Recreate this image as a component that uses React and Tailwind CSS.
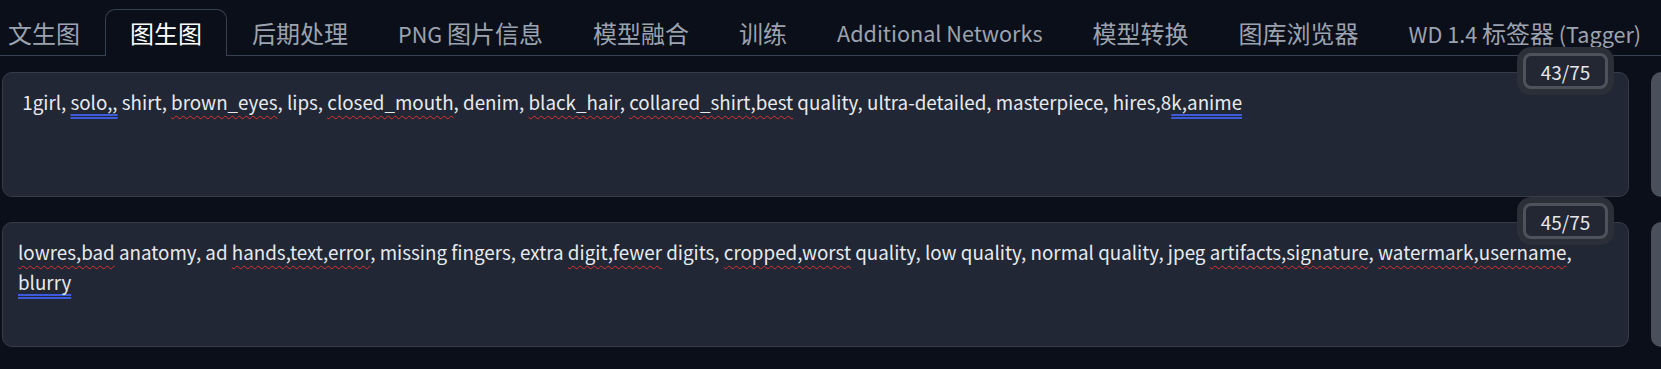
import React from "react";

const tabs = ["文生图", "图生图", "后期处理", "PNG 图片信息", "模型融合", "训练", "Additional Networks", "模型转换", "图库浏览器", "WD 1.4 标签器 (Tagger)"];

function Label({ text }) {
  const parts = text.split(/([\u4e00-\u9fff]+)/).filter(Boolean);
  return (
    <span>
      {parts.map((p, i) =>
        /[\u4e00-\u9fff]/.test(p) ? (
          <span key={i} className="text-[24px]">{p}</span>
        ) : (
          <span key={i} className="whitespace-pre text-[21.6px]">{p}</span>
        )
      )}
    </span>
  );
}

const R = ({ children }) => (
  <span className="underline decoration-wavy decoration-[#e03131] decoration-[1px] underline-offset-[5px]">{children}</span>
);
const B = ({ children }) => (
  <span className="underline decoration-double decoration-[#3b5bdb] decoration-[1.5px] underline-offset-[4px]">{children}</span>
);

function Counter({ value }) {
  return (
    <div className="absolute top-[-19px] right-[21px] w-[85px] h-[36px] flex items-center justify-center rounded-[8px] border-[3px] border-[#4d525b] bg-[#222733] ring-[6px] ring-[#2a2f38] text-[19px] leading-none text-[#e5e7eb]">
      {value}
    </div>
  );
}

function Box({ children, value }) {
  return (
    <div className="relative">
      <div className="h-[125px] rounded-[10px] border border-[#353b47] bg-[#212734] px-[15px] pt-[14px] text-[18.8px] leading-[30px] text-[#e8eaee]">
        {children}
      </div>
      <Counter value={value} />
    </div>
  );
}

export default function App() {
  return (
    <div
      className="w-[1661px] h-[369px] overflow-hidden bg-[#0b0f19]"
      style={{ fontFamily: '"Noto Sans CJK SC", "Noto Sans", sans-serif' }}
    >
      <div className="ml-[-17px] flex h-[56px] items-end border-b border-[#374151]">
        {tabs.map((t, i) => (
          <div
            key={t}
            className={
              i === 1
                ? "-mb-px flex h-[47px] items-center whitespace-nowrap rounded-t-[10px] border border-b-0 border-[#374151] bg-[#0b0f19] px-[24px] text-white"
                : "-mb-px flex h-[47px] items-center whitespace-nowrap border border-b-0 border-transparent px-[24px] text-[#9ca3af]"
            }
          >
            <Label text={t} />
          </div>
        ))}
      </div>
      <div className="flex gap-[22px] pl-[2px] pt-[16px]">
        <div className="flex w-[1627px] shrink-0 flex-col gap-[25px]">
          <Box value="43/75">
            {"\u00a0"}1girl, <B>solo,,</B> shirt, <R>brown_eyes</R>, lips, <R>closed_mouth</R>, denim, <R>black_hair</R>,{" "}
            <R>collared_shirt,best</R> quality, ultra-detailed, masterpiece, hires,8<B>k,anime</B>
          </Box>
          <Box value="45/75">
            <R>lowres,bad</R> anatomy, ad <R>hands,text,error</R>, missing fingers, extra <R>digit,fewer</R> digits,{" "}
            <R>cropped,worst</R> quality, low quality, normal quality, jpeg <R>artifacts,signature</R>,{" "}
            <R>watermark,username</R>, <B>blurry</B>
          </Box>
        </div>
        <div className="flex w-[200px] shrink-0 flex-col gap-[25px]">
          <div className="h-[125px] rounded-[10px] bg-[#4a505b]" />
          <div className="h-[125px] rounded-[10px] bg-[#4a505b]" />
        </div>
      </div>
    </div>
  );
}
